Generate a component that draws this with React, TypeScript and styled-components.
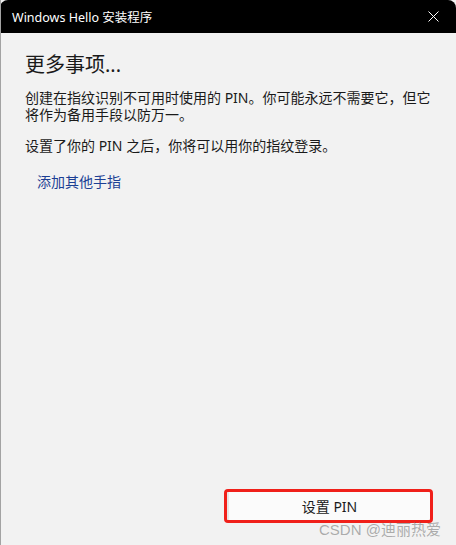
import styled, { createGlobalStyle } from "styled-components";

const GlobalStyle = createGlobalStyle`
  html, body {
    margin: 0;
    padding: 0;
    background: #f2f2f2;
  }
  * {
    box-sizing: border-box;
  }
`;

const Window = styled.div`
  position: relative;
  width: 456px;
  height: 545px;
  display: flex;
  flex-direction: column;
  background: #f2f2f2;
  border-left: 1px solid #a3a3a3;
  font-family: "Noto Sans", "Noto Sans CJK SC", sans-serif;
  color: #1a1a1a;
  overflow: hidden;
`;

const TitleBar = styled.div`
  height: 33px;
  flex-shrink: 0;
  display: flex;
  align-items: center;
  justify-content: space-between;
  padding: 0 17px 0 12px;
  margin-left: -1px;
  background: #000;
  border-radius: 8px 8px 0 0;
  color: #fff;
  font-size: 12.5px;
`;

const CloseButton = styled.div`
  width: 12px;
  height: 12px;
  display: flex;
  align-items: center;
  justify-content: center;
`;

const Content = styled.div`
  flex: 1;
  padding: 18px 14px 0 24px;
`;

const Heading = styled.h1`
  margin: 0 0 10px 0;
  font-size: 20px;
  font-weight: 400;
  line-height: 28px;
`;

const Paragraph = styled.p`
  margin: 0 0 14px 0;
  font-size: 14px;
  line-height: 17px;
`;

const LinkText = styled.a`
  display: inline-block;
  margin: 5px 0 0 12px;
  font-size: 14px;
  line-height: 17px;
  color: #1c3f94;
  text-decoration: none;
`;

const Footer = styled.div`
  display: flex;
  justify-content: flex-end;
  padding: 0 23px 22px 0;
`;

const Highlight = styled.div`
  border: 3px solid #f0201a;
  border-radius: 4px;
`;

const PrimaryButton = styled.button`
  display: flex;
  align-items: center;
  justify-content: center;
  width: 203px;
  height: 28px;
  background: #fbfbfb;
  border: none;
  border-left: 2px solid #e6e6e6;
  border-radius: 2px;
  font-family: "Noto Sans", "Noto Sans CJK SC", sans-serif;
  font-size: 14px;
  color: #1a1a1a;
  padding: 0;
`;

const Watermark = styled.div`
  position: absolute;
  left: 318px;
  top: 518px;
  font-family: "Liberation Sans", "Noto Sans CJK SC", sans-serif;
  font-size: 15px;
  color: rgba(110, 110, 110, 0.55);
  white-space: nowrap;
`;

export default function App() {
  return (
    <>
      <GlobalStyle />
      <Window>
        <TitleBar>
          <span>Windows Hello 安装程序</span>
          <CloseButton>
            <svg width="11" height="11" viewBox="0 0 11 11">
              <path d="M0.5 0.5 L10.5 10.5 M10.5 0.5 L0.5 10.5" stroke="#fff" strokeWidth="1" />
            </svg>
          </CloseButton>
        </TitleBar>
        <Content>
          <Heading>更多事项...</Heading>
          <Paragraph>
            创建在指纹识别不可用时使用的 PIN。你可能永远不需要它，但它将作为备用手段以防万一。
          </Paragraph>
          <Paragraph>设置了你的 PIN 之后，你将可以用你的指纹登录。</Paragraph>
          <LinkText href="#">添加其他手指</LinkText>
        </Content>
        <Footer>
          <Highlight>
            <PrimaryButton>设置 PIN</PrimaryButton>
          </Highlight>
        </Footer>
        <Watermark>CSDN @迪丽热爱</Watermark>
      </Window>
    </>
  );
}
